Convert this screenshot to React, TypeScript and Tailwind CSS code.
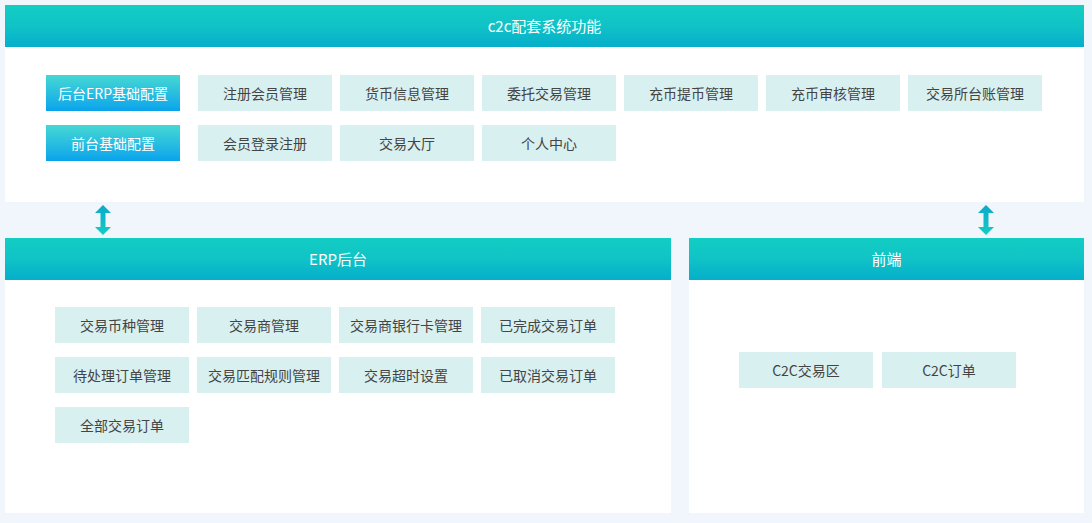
const font = { fontFamily: '"Noto Sans CJK SC", "Noto Sans", sans-serif' };

function Btn({ t, primary }: { t: string; primary?: boolean }) {
  return (
    <div
      className={
        "w-[134px] h-[36px] flex items-center justify-center text-[14px] " +
        (primary ? "bg-gradient-to-b from-[#45d8d2] to-[#08a3ec] text-white" : "bg-[#d9f0f0] text-[#444]")
      }
    >
      {t}
    </div>
  );
}

function Header({ t }: { t: string }) {
  return (
    <div className="h-[42px] bg-gradient-to-b from-[#13cdc4] via-[#10c3c6] to-[#06aecb] text-white text-[15px] flex items-center justify-center">
      {t}
    </div>
  );
}

function Arrow() {
  return (
    <svg width="18" height="30" viewBox="0 0 18 30">
      <defs>
        <linearGradient id="ag" x1="0" y1="0" x2="0" y2="1">
          <stop offset="0" stopColor="#0aa9c8" />
          <stop offset="1" stopColor="#13cdc4" />
        </linearGradient>
      </defs>
      <path d="M9 0 L17 8 L11.5 8 L11.5 22 L17 22 L9 30 L1 22 L6.5 22 L6.5 8 L1 8 Z" fill="url(#ag)" />
    </svg>
  );
}

export default function App() {
  return (
    <div className="w-[1092px] h-[523px] bg-[#f1f5fc] pl-[5px] pr-[8px] pt-[5px]" style={font}>
      <div className="bg-white h-[197px]">
        <Header t="c2c配套系统功能" />
        <div className="pl-[41px] pt-[28px] flex flex-col gap-[14px]">
          <div className="flex gap-[8px]">
            <div className="mr-[10px]"><Btn t="后台ERP基础配置" primary /></div>
            {["注册会员管理", "货币信息管理", "委托交易管理", "充币提币管理", "充币审核管理", "交易所台账管理"].map((t) => (
              <Btn key={t} t={t} />
            ))}
          </div>
          <div className="flex gap-[8px]">
            <div className="mr-[10px]"><Btn t="前台基础配置" primary /></div>
            {["会员登录注册", "交易大厅", "个人中心"].map((t) => (
              <Btn key={t} t={t} />
            ))}
          </div>
        </div>
      </div>
      <div className="h-[36px] flex items-center justify-between pl-[89px] pr-[89px]">
        <Arrow />
        <Arrow />
      </div>
      <div className="flex gap-[18px]">
        <div className="w-[666px] h-[275px] bg-white">
          <Header t="ERP后台" />
          <div className="pl-[50px] pt-[27px] grid grid-cols-[repeat(4,134px)] gap-x-[8px] gap-y-[14px]">
            {["交易币种管理", "交易商管理", "交易商银行卡管理", "已完成交易订单", "待处理订单管理", "交易匹配规则管理", "交易超时设置", "已取消交易订单", "全部交易订单"].map((t) => (
              <Btn key={t} t={t} />
            ))}
          </div>
        </div>
        <div className="flex-1 h-[275px] bg-white">
          <Header t="前端" />
          <div className="pt-[72px] pl-[50px] flex gap-[9px]">
            <Btn t="C2C交易区" />
            <Btn t="C2C订单" />
          </div>
        </div>
      </div>
    </div>
  );
}
